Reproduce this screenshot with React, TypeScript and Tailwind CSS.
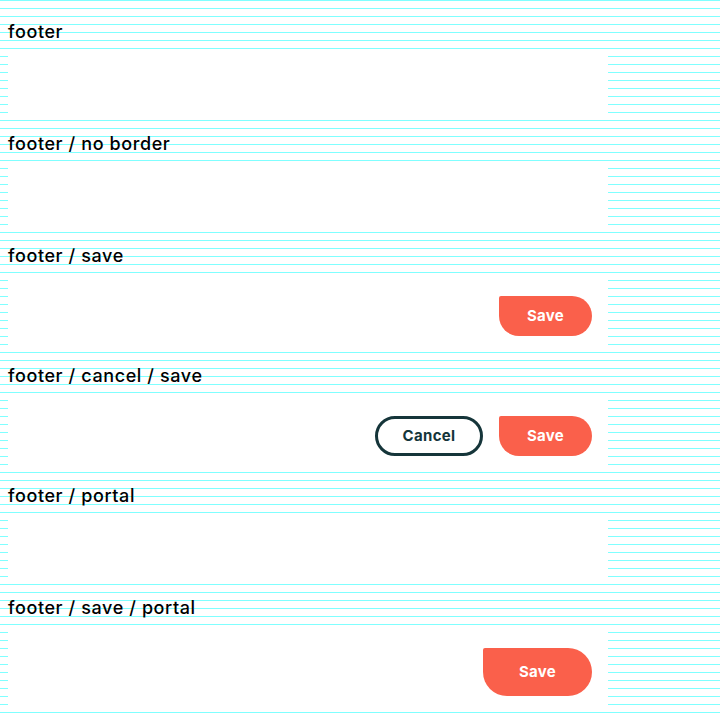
import React from 'react';

const font = { fontFamily: 'Inter, "Noto Sans", sans-serif' };

function Label({ children }: { children: React.ReactNode }) {
    return (
        <div className="pt-[15px] pb-[7px] text-[18px] leading-5 font-medium tracking-[0.6px] text-black">
            {children}
        </div>
    );
}

function SaveButton({ large }: { large?: boolean }) {
    return (
        <button
            className={
                large
                    ? 'h-12 w-[109px] pt-px bg-[#fa604b] text-white font-bold text-[15px] tracking-[0.3px] rounded-[2px_24px_24px_24px]'
                    : 'h-10 w-[93px] pt-px bg-[#fa604b] text-white font-bold text-[15px] tracking-[0.3px] rounded-[2px_20px_20px_20px]'
            }
        >
            Save
        </button>
    );
}

function CancelButton() {
    return (
        <button className="h-10 w-[108px] pt-px rounded-full border-[3px] border-[#15353a] text-[#15353a] font-bold text-[15px] tracking-[0.3px]">
            Cancel
        </button>
    );
}

export default function App() {
    return (
        <div
            className="min-h-screen px-2 pt-[7px] bg-white bg-[repeating-linear-gradient(to_bottom,#80ffff_0px,#80ffff_1px,transparent_1px,transparent_8px)]"
            style={font}
        >
            <div className="w-[600px]">
                <Label>footer</Label>
                <div className="h-[70px] bg-white" />

                <Label>footer / no border</Label>
                <div className="h-[70px] bg-white" />

                <Label>footer / save</Label>
                <div className="h-[78px] bg-white flex justify-end items-start pt-[23px] pr-4">
                    <SaveButton />
                </div>

                <Label>footer / cancel / save</Label>
                <div className="h-[78px] bg-white flex justify-end items-start gap-4 pt-[23px] pr-4">
                    <CancelButton />
                    <SaveButton />
                </div>

                <Label>footer / portal</Label>
                <div className="h-[70px] bg-white" />

                <Label>footer / save / portal</Label>
                <div className="h-[86px] bg-white flex justify-end items-start pt-[23px] pr-4">
                    <SaveButton large />
                </div>
            </div>
        </div>
    );
}
